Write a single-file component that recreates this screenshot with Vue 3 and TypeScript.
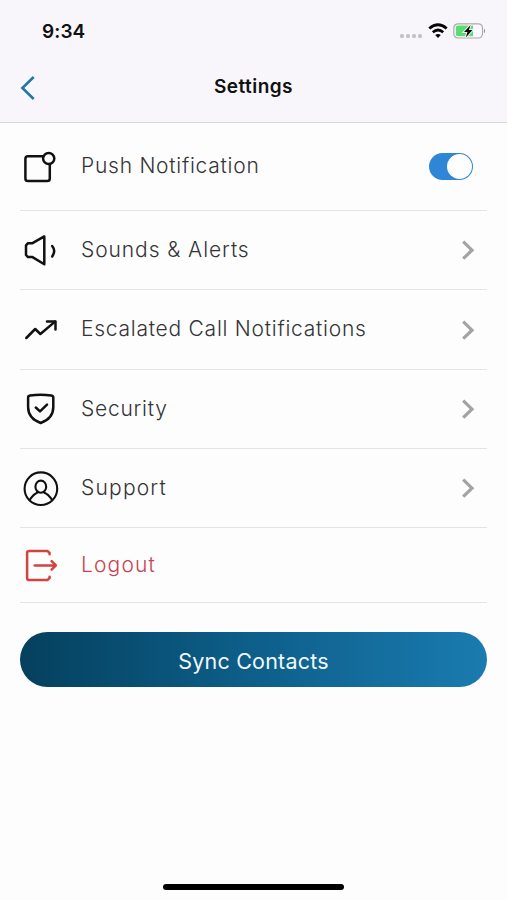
<script setup lang="ts">
import { ref } from 'vue'

interface SettingsItem {
  id: string
  label: string
  trailing: 'toggle' | 'chevron' | 'none'
}

const items: SettingsItem[] = [
  { id: 'push', label: 'Push Notification', trailing: 'toggle' },
  { id: 'sounds', label: 'Sounds & Alerts', trailing: 'chevron' },
  { id: 'escalated', label: 'Escalated Call Notifications', trailing: 'chevron' },
  { id: 'security', label: 'Security', trailing: 'chevron' },
  { id: 'support', label: 'Support', trailing: 'chevron' },
  { id: 'logout', label: 'Logout', trailing: 'none' },
]

const pushEnabled = ref(true)
</script>

<template>
  <div class="screen">
    <header class="header">
      <div class="status">
        <span class="time">9:34</span>
        <div class="indicators">
          <div class="dots"><i v-for="n in 4" :key="n" class="dot"></i></div>
          <svg class="wifi" width="20" height="16" viewBox="0 0 20 16" fill="none" stroke="#050505" stroke-width="2.8">
            <path d="M1.3 5.5Q10 -2 18.7 5.5" />
            <path d="M4.8 9.3Q10 4.8 15.2 9.3" />
            <path d="M10 15 7.2 12.1Q10 9.8 12.8 12.1Z" fill="#050505" stroke="none" />
          </svg>
          <svg class="battery" width="33" height="18" viewBox="0 0 33 18">
            <rect x="0.8" y="1.8" width="28.7" height="14.2" rx="4.2" fill="#fbfafc" stroke="#aaa8aa" stroke-width="1.2" />
            <path d="M5 3.5H20V14.3H5Q2.8 14.3 2.8 12V5.8Q2.8 3.5 5 3.5Z" fill="#5bdc72" />
            <path d="M31 6.5Q33 9 31 11.5Z" fill="#8c8a8c" />
            <path d="M17.6 3 11 10H14.4L12.8 15.4 19.5 8H15.9Z" fill="#080808" stroke="#f8f6fa" stroke-width="2" paint-order="stroke" />
          </svg>
        </div>
      </div>
      <nav class="nav">
        <button class="back" aria-label="Back">
          <svg width="16" height="26" viewBox="0 0 16 26" fill="none" stroke="#2377a8" stroke-width="2.6">
            <path d="M13.7 2 2.4 13 13.7 24" />
          </svg>
        </button>
        <h1 class="title">Settings</h1>
      </nav>
    </header>

    <main class="content">
      <ul class="list">
        <li v-for="item in items" :key="item.id" class="row" :class="item.id">
          <svg class="icon" width="40" height="40" viewBox="0 0 40 40">
            <g v-if="item.id === 'push'">
              <path d="M23 9.2H8Q5.4 9.2 5.4 11.8V31.4Q5.4 34 8 34H27.2Q29.8 34 29.8 31.4V17" />
              <circle cx="28.7" cy="11.5" r="5.6" />
            </g>
            <g v-else-if="item.id === 'sounds'">
              <path d="M12.5 13.2H8L6 15.3V25L8 27.1H12.5L24.3 34.3V6.4Z" />
              <path d="M32.2 16Q36.2 21 32.2 26.4" />
            </g>
            <g v-else-if="item.id === 'escalated'">
              <path d="M6.3 28 15.2 19 20.4 24 35 11.6" />
              <path d="M27 11.4H35.5V19.6" />
            </g>
            <g v-else-if="item.id === 'security'">
              <path d="M10 6.6Q20.6 5 31.3 6.6Q33.3 6.9 33.3 8.8V18Q33.3 29.5 20.7 34Q8.1 29.5 8.1 18V8.8Q8.1 6.9 10 6.6Z" />
              <path d="M15.8 18.5 20 22.4 27 15.7" />
            </g>
            <g v-else-if="item.id === 'support'" class="thin">
              <circle cx="20.9" cy="20.7" r="16.3" />
              <ellipse cx="20.8" cy="18.7" rx="5.4" ry="6.1" />
              <path d="M9.8 31.8Q13.5 26 17.6 24.4M24 24.4Q28.3 26 32 31.8" />
            </g>
            <g v-else>
              <path d="M29.6 9.2V8L27.4 5.9H9.2Q7.1 5.9 7.1 8V33Q7.1 35.1 9.2 35.1H27.4L29.6 33V31.8" />
              <path d="M14.7 20.4H35.5M31.6 16.2 35.9 20.4 31.6 24.6" />
            </g>
          </svg>
          <span class="label">{{ item.label }}</span>
          <button
            v-if="item.trailing === 'toggle'"
            class="toggle"
            :class="{ on: pushEnabled }"
            role="switch"
            :aria-checked="pushEnabled"
            @click="pushEnabled = !pushEnabled"
          >
            <i class="knob"></i>
          </button>
          <svg v-else-if="item.trailing === 'chevron'" class="chevron" width="14" height="20" viewBox="0 0 14 20">
            <path d="M2.2 1.7 11 10.2 2.2 18.7" />
          </svg>
        </li>
      </ul>
      <button class="sync">Sync Contacts</button>
    </main>

    <div class="home"></div>
  </div>
</template>

<style>
body {
  margin: 0;
  background: #fdfdfd;
}
</style>

<style scoped>
.screen {
  display: flex;
  flex-direction: column;
  width: 507px;
  height: 900px;
  background: #fdfdfd;
  font-family: Inter, "Liberation Sans", sans-serif;
  box-sizing: border-box;
  overflow: hidden;
}
button {
  border: 0;
  padding: 0;
  margin: 0;
  background: none;
  font-family: inherit;
}
.header {
  height: 122px;
  flex: none;
  background: #f8f6fa;
  border-bottom: 1px solid #d9d8db;
}
.status {
  display: flex;
  justify-content: space-between;
  align-items: center;
  height: 62px;
  padding: 0 21px 0 42px;
}
.time {
  font-size: 19px;
  font-weight: 600;
  color: #111;
  letter-spacing: 0.1px;
}
.indicators {
  display: flex;
  align-items: center;
}
.dots {
  display: flex;
  gap: 2px;
  padding-top: 9px;
  margin-right: 6px;
}
.dot {
  width: 4px;
  height: 4px;
  border-radius: 1.5px;
  background: #c4c2c6;
}
.wifi {
  margin-right: 5px;
}
.nav {
  display: grid;
  grid-template-columns: 60px 1fr 60px;
  align-items: center;
  height: 52px;
}
.back {
  display: flex;
  padding-left: 20px;
}
.title {
  margin: 0;
  padding-bottom: 3px;
  text-align: center;
  font-size: 19px;
  line-height: 24px;
  font-weight: 600;
  letter-spacing: 0.45px;
  color: #111;
}
.content {
  padding: 0 20px;
  flex: 1;
}
.list {
  list-style: none;
  margin: 0;
  padding: 0;
}
.row {
  display: flex;
  align-items: center;
  height: 79px;
  box-sizing: border-box;
  border-bottom: 1px solid #e4e4e4;
  color: #343436;
  letter-spacing: 0.75px;
}
.row.push {
  height: 88px;
}
.row.sounds {
  letter-spacing: 0.92px;
}
.row.escalated {
  height: 80px;
}
.row.support {
  letter-spacing: 1.2px;
}
.row.logout {
  height: 75px;
  color: #c84452;
  letter-spacing: 1.15px;
}
.icon {
  flex: none;
  fill: none;
  stroke: #111;
  stroke-width: 2.5;
  stroke-linecap: round;
  stroke-linejoin: round;
}
.icon .thin {
  stroke-width: 2.1;
}
.logout .icon {
  stroke: #d4433f;
}
.label {
  flex: 1;
  padding: 0 0 1px 21px;
  font-size: 21px;
  line-height: 28px;
  font-weight: 300;
}
.chevron {
  margin-right: 12px;
  fill: none;
  stroke: #a3a3a5;
  stroke-width: 3.2;
}
.toggle {
  display: flex;
  width: 44px;
  height: 27px;
  margin-right: 14px;
  padding: 1px;
  box-sizing: border-box;
  border-radius: 14px;
  background: #b8b8ba;
}
.toggle.on {
  justify-content: flex-end;
  background: #2f86d6;
}
.knob {
  width: 25px;
  height: 25px;
  border-radius: 50%;
  background: #fefefe;
}
.sync {
  display: block;
  width: 100%;
  height: 55px;
  margin-top: 29px;
  padding-top: 2px;
  border-radius: 28px;
  background: linear-gradient(90deg, #05405d 0%, #0c5c86 45%, #1a7bb0 100%);
  color: #f1f8fb;
  font-size: 21.5px;
  font-weight: 400;
  letter-spacing: 0.2px;
}
.home {
  flex: none;
  align-self: center;
  width: 181px;
  height: 6px;
  margin-bottom: 10px;
  border-radius: 3px;
  background: #000;
}
</style>
